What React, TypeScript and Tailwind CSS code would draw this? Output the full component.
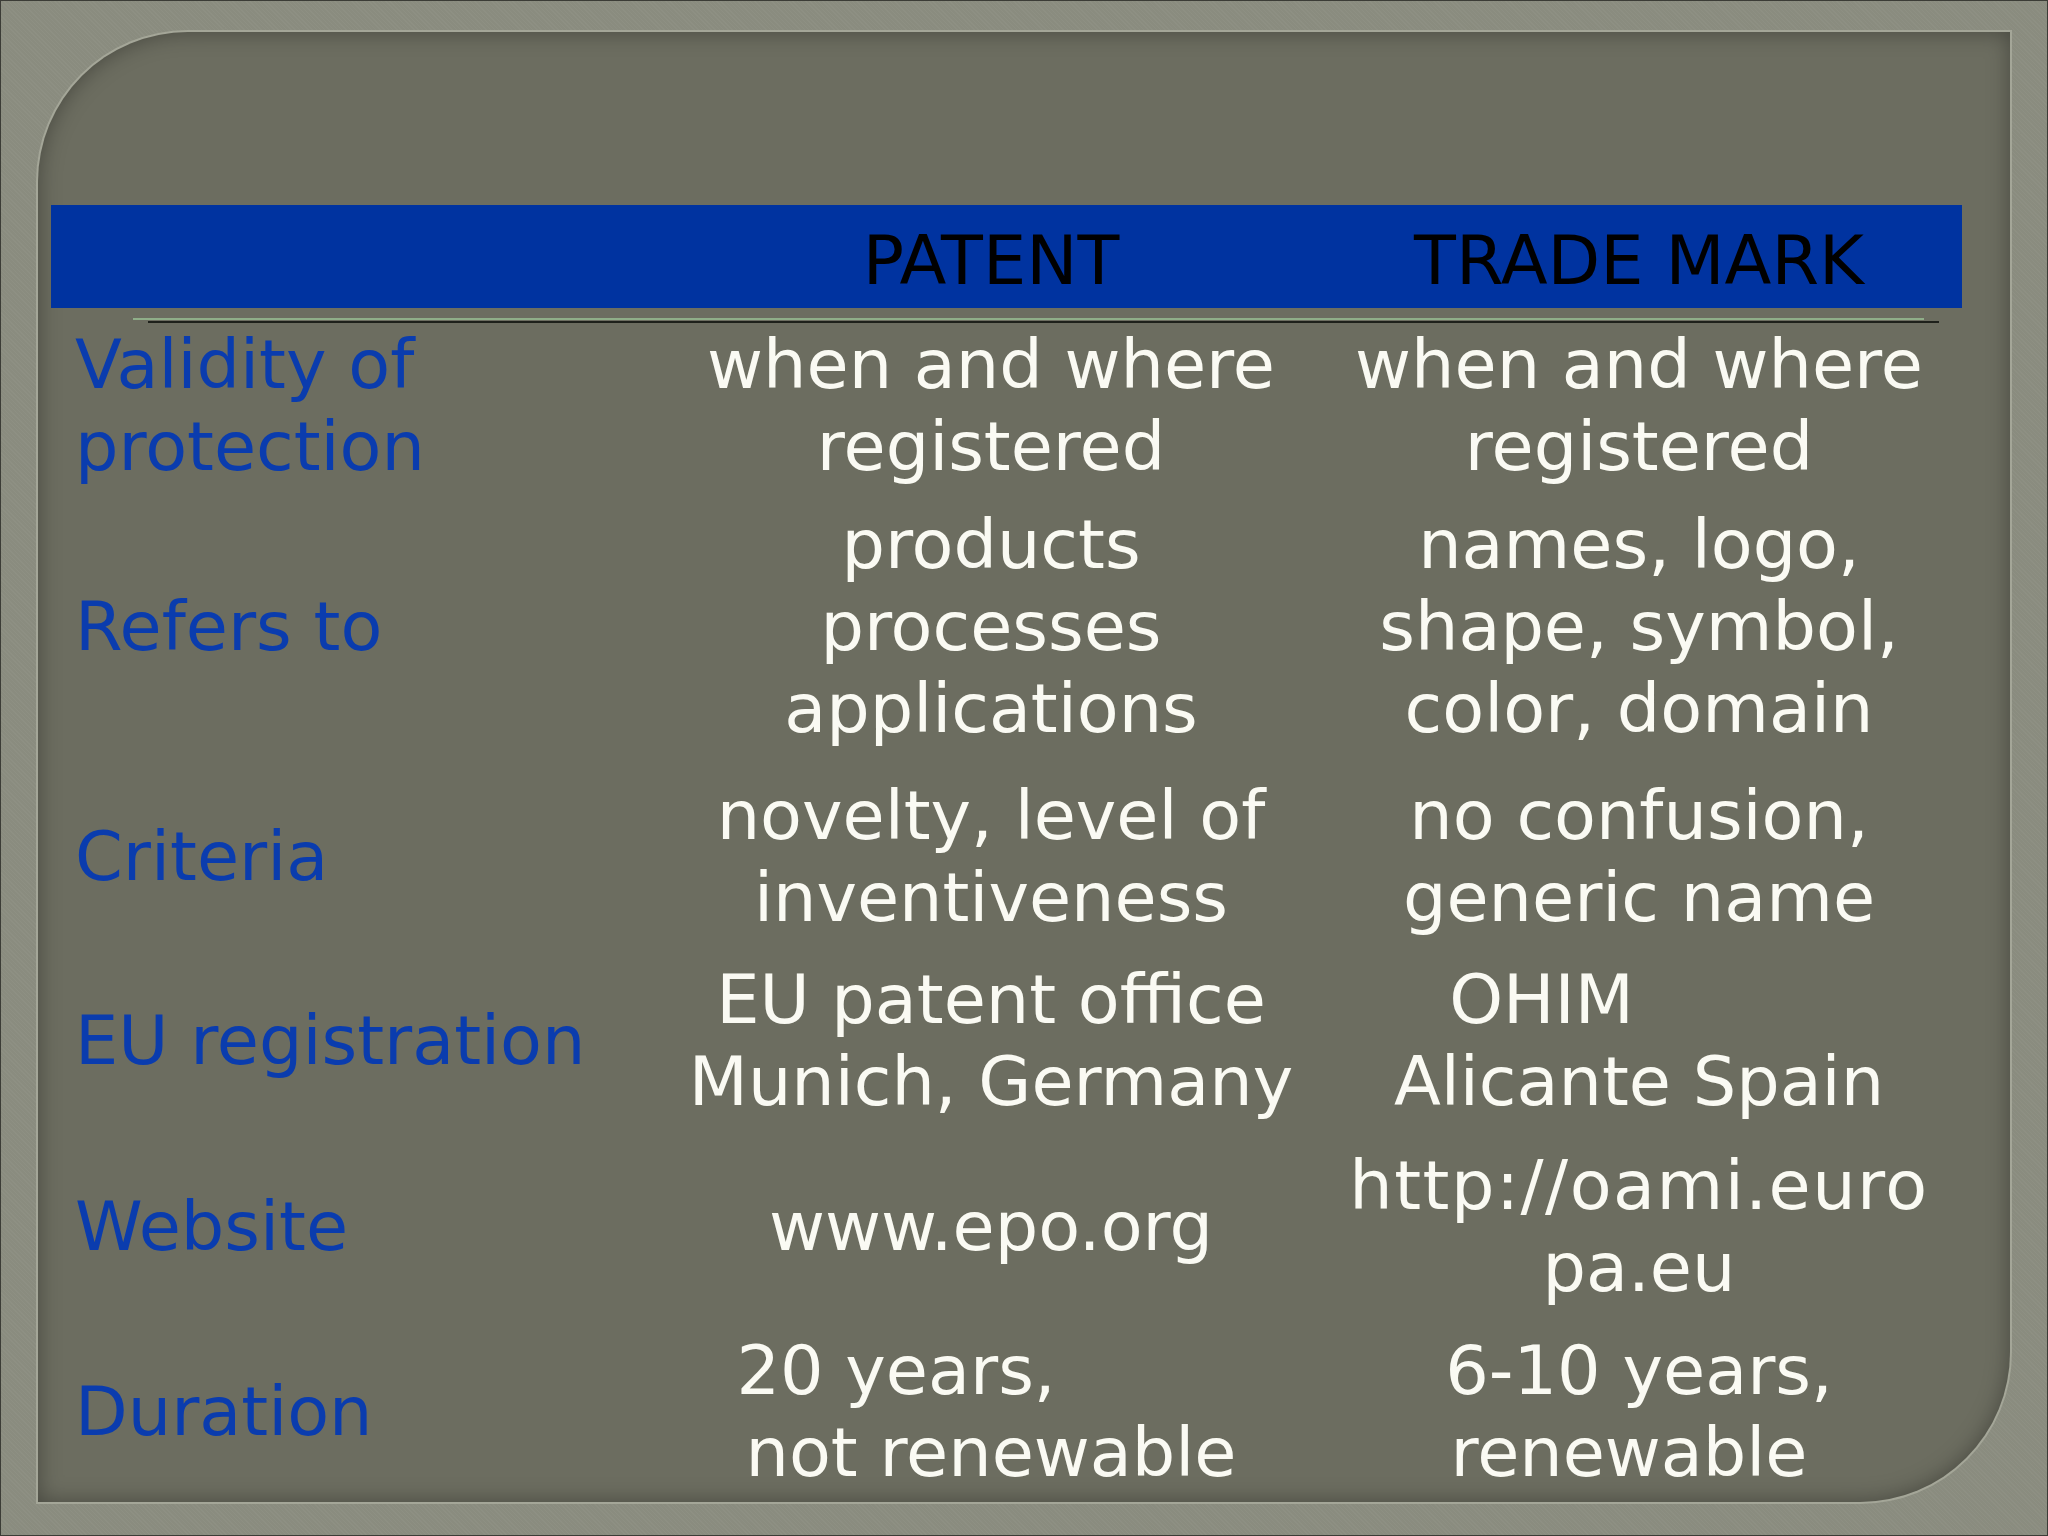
import React from "react";

type Line = string | { text: string; pad: string };

type Row = {
  label: string[];
  patent: Line[];
  mark: Line[];
  gap: string;
};

const rows: Row[] = [
  {
    label: ["Validity of", "protection"],
    patent: ["when and where", "registered"],
    mark: ["when and where", "registered"],
    gap: "mb-[16px]",
  },
  {
    label: ["Refers to"],
    patent: ["products", "processes", "applications"],
    mark: ["names, logo,", "shape, symbol,", "color, domain"],
    gap: "mb-[25px]",
  },
  {
    label: ["Criteria"],
    patent: ["novelty, level of", "inventiveness"],
    mark: ["no confusion,", "generic name"],
    gap: "mb-[20px]",
  },
  {
    label: ["EU registration"],
    patent: ["EU patent office", "Munich, Germany"],
    mark: [{ text: "OHIM", pad: "pr-[195px]" }, "Alicante Spain"],
    gap: "mb-[22px]",
  },
  {
    label: ["Website"],
    patent: ["www.epo.org"],
    mark: [{ text: "http://oami.euro", pad: "tracking-[1.5px]" }, "pa.eu"],
    gap: "mb-[21px]",
  },
  {
    label: ["Duration"],
    patent: [{ text: "20 years,", pad: "pr-[190px]" }, "not renewable"],
    mark: ["6-10 years,", { text: "renewable", pad: "pr-[20px]" }],
    gap: "mb-0",
  },
];

function Cell({ lines }: { lines: Line[] }) {
  return (
    <div className="flex flex-col items-center">
      {lines.map((line, i) =>
        typeof line === "string" ? (
          <div key={i} className="whitespace-nowrap">
            {line}
          </div>
        ) : (
          <div key={i} className={`whitespace-nowrap ${line.pad}`}>
            {line.text}
          </div>
        )
      )}
    </div>
  );
}

export default function App() {
  return (
    <div className="w-[2048px] h-[1536px] overflow-hidden border border-[#3b3c36] bg-[#8a8c7f] bg-[image:repeating-linear-gradient(45deg,rgba(255,255,255,0.03)_0_1px,transparent_1px_3px)] font-['DejaVu_Sans','Verdana',sans-serif] text-[68.5px] leading-[82px]">
      <div className="ml-[37px] mt-[31px] w-[1972px] h-[1470px] rounded-tl-[150px] rounded-br-[150px] bg-[#6c6d60] shadow-[0_0_0_2px_#a4a698,inset_0_0_22px_rgba(0,0,0,0.35)] pt-[173px] pl-[13px] overflow-hidden">
        <div className="w-[1911px]">
          {/* header */}
          <div className="h-[103px] bg-[#0033a0] pt-[14px] grid grid-cols-[615px_650px_646px] text-black">
            <div />
            <div className="text-center whitespace-nowrap">PATENT</div>
            <div className="text-center whitespace-nowrap">TRADE MARK</div>
          </div>

          {/* rule under header */}
          <div className="mt-[10px] ml-[82px] w-[1791px] h-[2px] bg-[#8fae88]" />
          <div className="mt-[1px] ml-[97px] w-[1791px] h-[2px] bg-[#1e211b]" />

          {/* body */}
          <div className="text-[#fafaf3]">
            {rows.map((row, i) => (
              <div key={i} className={`grid grid-cols-[615px_650px_646px] items-center ${row.gap}`}>
                <div className="pl-[24px] text-[#0a3cae]">
                  {row.label.map((l, j) => (
                    <div key={j} className="whitespace-nowrap">
                      {l}
                    </div>
                  ))}
                </div>
                <Cell lines={row.patent} />
                <Cell lines={row.mark} />
              </div>
            ))}
          </div>
        </div>
      </div>
    </div>
  );
}
